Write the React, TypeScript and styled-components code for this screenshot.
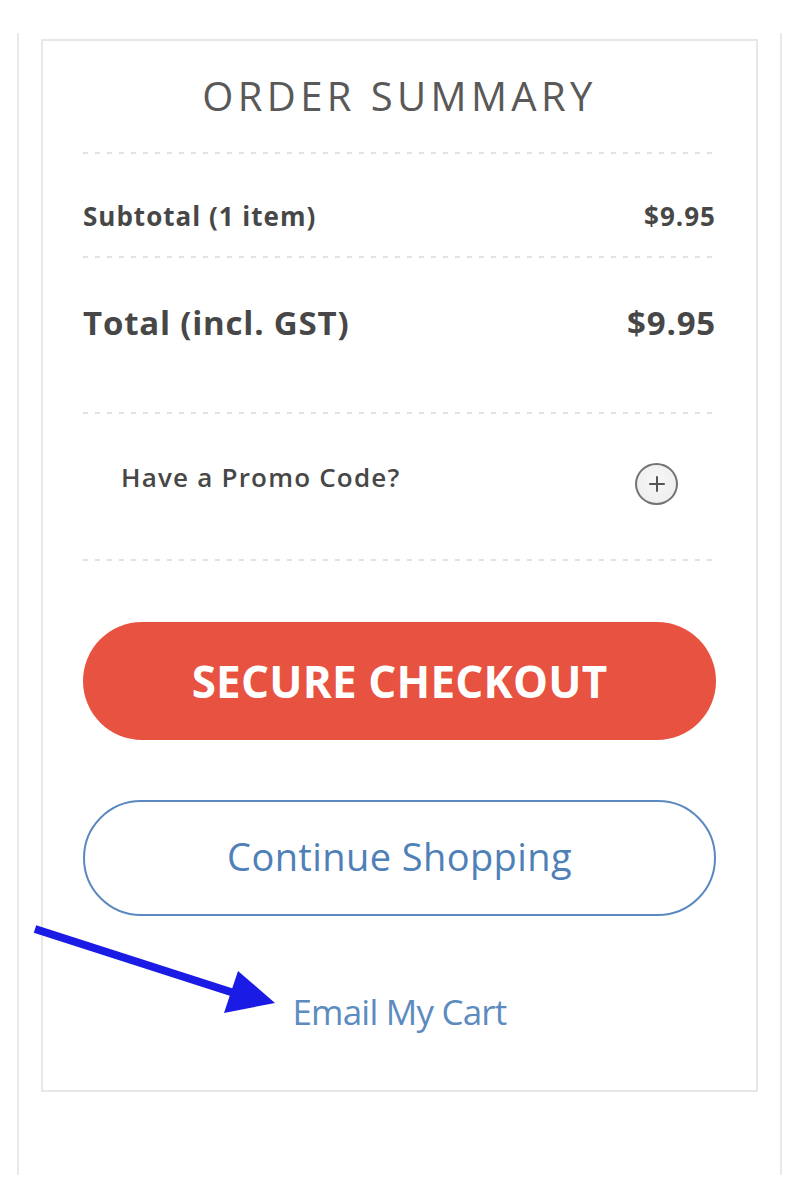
import React from "react";
import styled, { createGlobalStyle } from "styled-components";

const GlobalStyle = createGlobalStyle`
  html, body { margin: 0; padding: 0; background: #ffffff; }
  body { font-family: "Open Sans", "Liberation Sans", sans-serif; }
  * { box-sizing: border-box; }
`;

const Page = styled.div`
  position: relative;
  width: 800px;
  height: 1199px;
  padding: 33px 18px 0 17px;
  overflow: hidden;
`;

const Outer = styled.div`
  border-left: 2px solid #e9e9e9;
  border-right: 2px solid #e9e9e9;
  padding: 6px 22px 83px;
`;

const Card = styled.section`
  border: 2px solid #e7e7e7;
  padding: 0 40px 54px;
  display: flex;
  flex-direction: column;
`;

const Title = styled.h2`
  margin: 28px 0 29px;
  text-align: center;
  font-family: "Open Sans", sans-serif;
  font-weight: 400;
  font-size: 40px;
  line-height: 54px;
  letter-spacing: 4.4px;
  color: #595959;
`;

const Divider = styled.div`
  height: 2px;
  background-image: repeating-linear-gradient(
    to right,
    #e2e2e2 0 5px,
    transparent 5px 12px
  );
`;

const Row = styled.div<{ $pt: number; $pb: number; $px?: number }>`
  display: flex;
  justify-content: space-between;
  align-items: flex-start;
  padding: ${(p) => p.$pt}px ${(p) => p.$px ?? 0}px ${(p) => p.$pb}px;
`;

const Label = styled.span<{ $size: number; $weight: number; $spacing: number; $lh: number }>`
  font-family: "Open Sans", sans-serif;
  font-size: ${(p) => p.$size}px;
  font-weight: ${(p) => p.$weight};
  letter-spacing: ${(p) => p.$spacing}px;
  line-height: ${(p) => p.$lh}px;
  color: #474747;
  white-space: nowrap;
`;

const PlusButton = styled.button`
  width: 43px;
  height: 42px;
  margin-top: 4px;
  border-radius: 50%;
  border: 2px solid #737373;
  background: radial-gradient(circle at 50% 40%, #f7f7f7, #ececec);
  display: flex;
  align-items: center;
  justify-content: center;
  padding: 0;
`;

const CheckoutButton = styled.button`
  margin-top: 61px;
  height: 118px;
  border: none;
  border-radius: 59px;
  background: #e85240;
  color: #ffffff;
  font-family: "Open Sans", sans-serif;
  font-weight: 700;
  font-size: 44px;
  letter-spacing: 0.2px;
  padding: 0;
`;

const ContinueButton = styled.button`
  margin-top: 60px;
  height: 116px;
  border: 2px solid #5b89bf;
  border-radius: 58px;
  background: #ffffff;
  color: #4f80b8;
  font-family: "Open Sans", sans-serif;
  font-weight: 400;
  font-size: 38px;
  letter-spacing: 0.4px;
  padding: 0 0 4px;
`;

const EmailLink = styled.a`
  margin-top: 72px;
  align-self: center;
  font-family: "Open Sans", sans-serif;
  font-size: 35px;
  letter-spacing: -0.8px;
  line-height: 48px;
  color: #5c8bbf;
  text-decoration: none;
  cursor: pointer;
`;

const Annotation = styled.svg`
  position: absolute;
  left: 0;
  top: 0;
  pointer-events: none;
`;

export default function App() {
  return (
    <>
      <GlobalStyle />
      <Page>
        <Outer>
          <Card>
            <Title>ORDER SUMMARY</Title>
            <Divider />
            <Row $pt={44} $pb={22}>
              <Label $size={26} $weight={700} $spacing={1} $lh={36}>
                Subtotal (1 item)
              </Label>
              <Label $size={26} $weight={700} $spacing={1} $lh={36}>
                $9.95
              </Label>
            </Row>
            <Divider />
            <Row $pt={42} $pb={67}>
              <Label $size={33} $weight={700} $spacing={0.8} $lh={45}>
                Total (incl. GST)
              </Label>
              <Label $size={33} $weight={700} $spacing={0.8} $lh={45}>
                $9.95
              </Label>
            </Row>
            <Divider />
            <Row $pt={45} $pb={54} $px={38}>
              <Label $size={26} $weight={600} $spacing={1.2} $lh={36}>
                Have a Promo Code?
              </Label>
              <PlusButton aria-label="Add promo code">
                <svg width="18" height="18" viewBox="0 0 18 18">
                  <path d="M9 2v14M2 9h14" stroke="#555" strokeWidth="2" strokeLinecap="round" />
                </svg>
              </PlusButton>
            </Row>
            <Divider />
            <CheckoutButton>SECURE CHECKOUT</CheckoutButton>
            <ContinueButton>Continue Shopping</ContinueButton>
            <EmailLink>Email My Cart</EmailLink>
          </Card>
        </Outer>
        <Annotation width="800" height="1199" viewBox="0 0 800 1199">
          <line x1="35" y1="929" x2="234" y2="993" stroke="#1b1be6" strokeWidth="8" />
          <polygon points="238,971 275,1003 224,1013" fill="#1b1be6" />
        </Annotation>
      </Page>
    </>
  );
}
